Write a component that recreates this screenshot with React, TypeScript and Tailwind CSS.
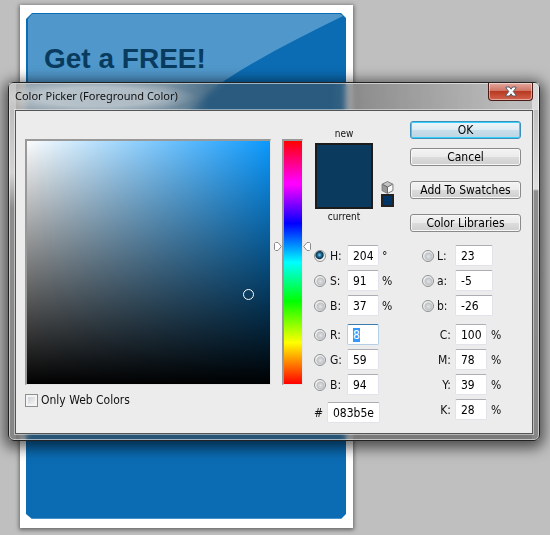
import React, { useEffect, useRef } from 'react';
import clsx from 'clsx';

interface Channel {
  id: string;
  label: string;
  value: string;
  unit?: string;
}

const hsb: Channel[] = [
  { id: 'hue', label: 'H:', value: '204', unit: '°' },
  { id: 'saturation', label: 'S:', value: '91', unit: '%' },
  { id: 'brightness', label: 'B:', value: '37', unit: '%' },
];

const rgb: Channel[] = [
  { id: 'red', label: 'R:', value: '8' },
  { id: 'green', label: 'G:', value: '59' },
  { id: 'blue', label: 'B:', value: '94' },
];

const lab: Channel[] = [
  { id: 'lab-l', label: 'L:', value: '23' },
  { id: 'lab-a', label: 'a:', value: '-5' },
  { id: 'lab-b', label: 'b:', value: '-26' },
];

const cmyk: Channel[] = [
  { id: 'cyan', label: 'C:', value: '100', unit: '%' },
  { id: 'magenta', label: 'M:', value: '78', unit: '%' },
  { id: 'yellow', label: 'Y:', value: '39', unit: '%' },
  { id: 'black', label: 'K:', value: '28', unit: '%' },
];

const fieldClass =
  'h-[21px] min-w-0 rounded-[2px] border border-[#e2e3ea] border-t-[#abadb3] bg-white pl-[5px] text-black outline-none focus:border-[#b5cfe7] focus:border-t-[#3d7bad] selection:bg-[#3399ff] selection:text-white';

function Radio({ id, checked }: { id: string; checked?: boolean }) {
  return (
    <input
      id={id}
      type="radio"
      name="channel"
      defaultChecked={checked}
      className="size-3 shrink-0 appearance-none rounded-full border border-[#8e8f8f] bg-[radial-gradient(circle_at_55%_55%,#e2e4e6_0%,#bfc3c7_45%,#f2f2f2_60%)] checked:bg-[radial-gradient(circle_at_45%_40%,#7fd4f5_0%,#1c6a94_25%,#0c3048_45%,#f4f4f4_58%)]"
    />
  );
}

function PushButton({ children, primary }: { children: React.ReactNode; primary?: boolean }) {
  return (
    <button
      type="button"
      className={clsx(
        'flex h-[18px] w-full items-center justify-center rounded-[3px] border text-black',
        primary
          ? 'border-[#3c8fb8] bg-[linear-gradient(#eef5f9_0%,#dfecf3_48%,#c9dfea_52%,#bcd4e2_100%)] shadow-[inset_0_0_0_1px_#35d0fb]'
          : 'border-[#8a8a8a] bg-[linear-gradient(#f3f3f3_0%,#ebebeb_48%,#dcdcdc_52%,#cfcfcf_100%)] shadow-[inset_0_0_0_1px_#f7f7f7]'
      )}
    >
      {children}
    </button>
  );
}

function LeftRow({ channel, checked, fieldRef }: { channel: Channel; checked?: boolean; fieldRef?: React.Ref<HTMLInputElement> }) {
  return (
    <div className="flex items-center">
      <Radio id={`pick-${channel.id}`} checked={checked} />
      <label htmlFor={`pick-${channel.id}`} className="w-[21px] pl-1">
        {channel.label}
      </label>
      <input ref={fieldRef} aria-label={channel.id} defaultValue={channel.value} className={`${fieldClass} w-8`} />
      {channel.unit && <span className="pl-[3px]">{channel.unit}</span>}
    </div>
  );
}

function Cube() {
  return (
    <svg width="13" height="13" viewBox="0 0 13 13" aria-hidden="true">
      <path d="M6.5 .5 12 3.2V9.6L6.5 12.5 1 9.6V3.2Z" fill="#8b8b8b" stroke="#777" strokeWidth=".8" />
      <path d="M6.5 1 11.4 3.4 6.5 6 1.6 3.4Z" fill="#c4c4c4" />
      <path d="M6.5 6 11.4 3.5V9.2L6.5 12Z" fill="#fafafa" />
      <path d="M1.6 3.5 6.5 6V12L1.6 9.2Z" fill="#999" />
      <path d="M1.6 3.4 6.5 6 11.4 3.4M6.5 6V12" fill="none" stroke="#555" strokeWidth=".8" />
    </svg>
  );
}

function HueMarker({ flip }: { flip?: boolean }) {
  return (
    <svg
      width="8"
      height="9"
      viewBox="0 0 8 9"
      aria-hidden="true"
      className={clsx('absolute top-[101px]', flip ? 'left-full ml-px -scale-x-100' : 'right-full mr-[2px]')}
    >
      <path d="M.5 1.5 1.5 .5H4L7.3 4.5 4 8.5H1.5L.5 7.5Z" fill="#fff" stroke="#8c8c8c" />
    </svg>
  );
}

function Poster() {
  return (
    <div className="mr-[197px] ml-5 flex flex-1 bg-white pt-2 pr-[7px] pb-[9px] pl-[6px] shadow-[0_1px_4px_1px_rgba(0,0,0,0.45)]">
      <div className="relative flex-1 bg-[#0b6cb4] pt-7 pl-[18px] [clip-path:polygon(6px_0,calc(100%-5px)_0,100%_5px,100%_calc(100%-5px),calc(100%-5px)_100%,6px_100%,0_calc(100%-5px),0_6px)]">
        <svg className="absolute inset-0 size-full" viewBox="0 0 321 507" preserveAspectRatio="none" aria-hidden="true">
          <path d="M2 6 6 1H315L318 3C275 24 235 44 199 68Q170 88 145 124L2 330Z" fill="#5098cb" />
          <path d="M6 506.5H316" stroke="#4a94cb" />
        </svg>
        <h1 className="relative font-['Liberation_Sans',sans-serif] text-[28px] leading-9 font-bold text-[#083b5e]">Get a FREE!</h1>
      </div>
    </div>
  );
}

export default function App() {
  const redRef = useRef<HTMLInputElement>(null);

  useEffect(() => {
    redRef.current?.focus();
    redRef.current?.select();
  }, []);

  return (
    <main className="relative flex min-h-screen flex-col overflow-hidden bg-[#bfbfbf] pt-[5px] pb-[7px]">
      <Poster />

      <section
        role="dialog"
        aria-labelledby="picker-title"
        className="absolute top-[82px] right-[10px] left-2 rounded-[6px] border border-[#222] bg-[linear-gradient(rgba(75,75,75,0.5),rgba(65,65,65,0.55))] px-[6px] pb-[6px] font-['DejaVu_Sans_Condensed','DejaVu_Sans',sans-serif] text-[12px] leading-4 text-[#111] shadow-[inset_0_0_0_1px_rgba(255,255,255,0.55),0_3px_14px_4px_rgba(0,0,0,0.6)] backdrop-blur-[3px]"
      >
        <div className="pointer-events-none absolute inset-y-0 left-0 w-[7px] bg-[linear-gradient(rgba(255,255,255,0.4)_0,rgba(255,255,255,0.65)_90px,rgba(255,255,255,0.1)_125px)]" />
        <div className="pointer-events-none absolute inset-y-0 right-0 w-[7px] bg-[linear-gradient(rgba(255,255,255,0.4)_0,rgba(255,255,255,0.75)_106px,rgba(255,255,255,0.1)_108px)]" />
        <header className="relative -mx-[6px] flex h-[27px] items-start justify-between rounded-t-[5px] bg-[radial-gradient(ellipse_100px_16px_at_88px_14px,rgba(255,255,255,0.35)_60%,transparent),linear-gradient(90deg,rgba(205,205,205,0.6)_0px,rgba(205,205,205,0.4)_155px,transparent_200px,transparent_320px,rgba(255,255,255,0.45)_500px)] px-[6px]">
          <h2 id="picker-title" className="pt-[5px] font-['Noto_Sans','Open_Sans',sans-serif] text-[11px]">
            Color Picker (Foreground Color)
          </h2>
          <button
            type="button"
            aria-label="Close"
            className="flex h-[18px] w-[45px] items-center justify-center rounded-b-[4px] border border-t-0 border-[#4a1a14] bg-[linear-gradient(#e3a99f_0%,#cf7565_45%,#b93a22_50%,#d2624c_100%)] shadow-[inset_0_0_0_1px_rgba(255,255,255,0.45)]"
          >
            <svg width="12" height="11" viewBox="0 0 12 11" aria-hidden="true">
              <path d="M1 1H4.3L6 3.2 7.7 1H11V2L8.2 5.5 11 9V10H7.7L6 7.8 4.3 10H1V9L3.8 5.5 1 2Z" fill="#fff" stroke="#555b6b" />
            </svg>
          </button>
        </header>

        <div className="relative flex border border-[#555] bg-[#ececec] pr-[11px] pb-[10px] pl-[9px] shadow-[0_0_0_1px_rgba(255,255,255,0.45)]">
          <div className="min-w-0 flex-1 pt-7">
            <div className="relative h-[246px] border-t-2 border-r border-b border-l-2 border-[#999] border-r-[#e4e4e4] border-b-[#e4e4e4] bg-[linear-gradient(transparent,#000),linear-gradient(90deg,#fff,#0a99ff)] bg-origin-border">
              <span className="absolute top-[61%] left-[89%] size-[11px] rounded-full border border-white" />
            </div>
            <label className="mt-[7px] flex items-center gap-[3px]">
              <input
                type="checkbox"
                className="size-[13px] appearance-none border border-[#8e8f8f] bg-[linear-gradient(135deg,#c8cdd2,#fafafa)] shadow-[inset_0_0_0_2px_#f4f4f4]"
              />
              Only Web Colors
            </label>
          </div>

          <div className="ml-[11px] w-[21px] pt-7">
            <div className="relative h-[246px] border-t-2 border-r border-b border-l-2 border-[#999] border-r-[#e4e4e4] border-b-[#e4e4e4] bg-[linear-gradient(#f00,#f0f_17%,#f0f_18%,#00f_34%,#0ff_50%,#0f0_66%,#ff0_83%,#f00)]">
              <HueMarker />
              <HueMarker flip />
            </div>
          </div>

          <div className="ml-[11px] w-20 pt-[15px]">
            <div className="flex h-[119px] gap-2 pl-px">
              <div className="w-[58px] text-center text-[10px]">
                <div>new</div>
                <div className="mt-px h-[66px] border-2 border-[#1c1c1c] bg-[#0a3b5e]" />
                <div>current</div>
              </div>
              <div className="flex flex-col pt-[55px]">
                <Cube />
                <span className="size-[13px] border-2 border-[#222] bg-[#003366]" />
              </div>
            </div>
            <div className="flex flex-col gap-1">
              {hsb.map((channel) => (
                <LeftRow key={channel.id} channel={channel} checked={channel.id === 'hue'} />
              ))}
            </div>
            <div className="mt-2 flex flex-col gap-1">
              {rgb.map((channel) => (
                <LeftRow key={channel.id} channel={channel} fieldRef={channel.id === 'red' ? redRef : undefined} />
              ))}
            </div>
            <div className="mt-[7px] flex items-center">
              <label htmlFor="hex" className="w-[13px]">
                #
              </label>
              <input id="hex" defaultValue="083b5e" className={`${fieldClass} w-[53px]`} />
            </div>
          </div>

          <div className="ml-4 w-[111px] pt-[10px]">
            <div className="flex h-[124px] flex-col">
              <div className="flex flex-col gap-[9px]">
                <PushButton primary>OK</PushButton>
                <PushButton>Cancel</PushButton>
              </div>
              <div className="mt-[15px] flex flex-col gap-[15px]">
                <PushButton>Add To Swatches</PushButton>
                <PushButton>Color Libraries</PushButton>
              </div>
            </div>
            <div className="flex flex-col gap-1 pl-3">
              {lab.map((channel) => (
                <div key={channel.id} className="flex items-center">
                  <Radio id={`pick-${channel.id}`} />
                  <label htmlFor={`pick-${channel.id}`} className="w-[21px] pl-[3px]">
                    {channel.label}
                  </label>
                  <input aria-label={channel.id} defaultValue={channel.value} className={`${fieldClass} w-[38px]`} />
                </div>
              ))}
            </div>
            <div className="mt-2 flex flex-col gap-1 pl-3">
              {cmyk.map((channel) => (
                <div key={channel.id} className="flex items-center">
                  <label htmlFor={channel.id} className="w-[33px] pr-1 text-right">
                    {channel.label}
                  </label>
                  <input id={channel.id} defaultValue={channel.value} className={`${fieldClass} w-8`} />
                  <span className="pl-1">{channel.unit}</span>
                </div>
              ))}
            </div>
          </div>
        </div>
      </section>
    </main>
  );
}
